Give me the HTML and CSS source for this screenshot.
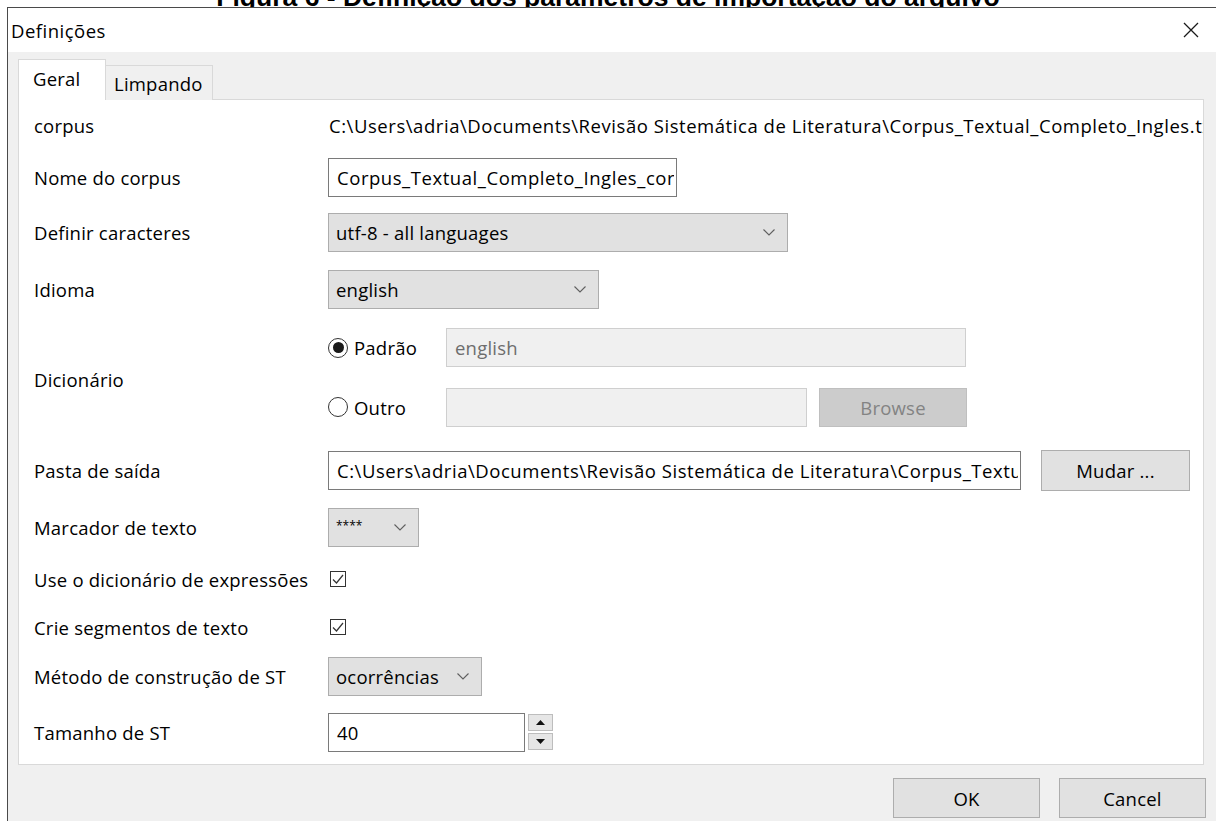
FILE: index.html
```html
<!DOCTYPE html>
<html lang="pt">
<head>
<meta charset="utf-8">
<title>Definições</title>
<link rel="stylesheet" href="styles.css">
</head>
<body>
<div class="caption"><span>Figura 6 - Definição dos parâmetros de importação do arquivo</span></div>
<div class="dialog">
  <div class="titlebar">
    <span class="title">Definições</span>
    <svg class="close" width="16" height="16" viewBox="0 0 16 16"><path d="M1 1 L15 15 M15 1 L1 15" stroke="#1a1a1a" stroke-width="1.3" fill="none"/></svg>
  </div>
  <div class="body">
    <div class="tabs">
      <div class="tab active">Geral</div>
      <div class="tab">Limpando</div>
    </div>
    <div class="panel">
      <div class="form">
        <div class="label r1">corpus</div>
        <div class="ctl r1"><span class="clip path">C:\Users\adria\Documents\Revisão Sistemática de Literatura\Corpus_Textual_Completo_Ingles.txt</span></div>

        <div class="label r2">Nome do corpus</div>
        <div class="ctl r2"><div class="input w-nome"><span class="clip path">Corpus_Textual_Completo_Ingles_corpus</span></div></div>

        <div class="label r3">Definir caracteres</div>
        <div class="ctl r3"><div class="combo w-charset"><span>utf-8 - all languages</span><svg class="chev" width="12" height="7" viewBox="0 0 12 7"><path d="M0.5 0.5 L6 6 L11.5 0.5" stroke="#5f5f5f" stroke-width="1.1" fill="none"/></svg></div></div>

        <div class="label r4">Idioma</div>
        <div class="ctl r4"><div class="combo w-idioma"><span>english</span><svg class="chev" width="12" height="7" viewBox="0 0 12 7"><path d="M0.5 0.5 L6 6 L11.5 0.5" stroke="#5f5f5f" stroke-width="1.1" fill="none"/></svg></div></div>

        <div class="label r5">Dicionário</div>
        <div class="ctl r5 dict">
          <div class="dict-row first">
            <div class="radio-opt"><span class="radio on"></span>Padrão</div>
            <div class="input disabled w-padrao">english</div>
          </div>
          <div class="dict-row">
            <div class="radio-opt"><span class="radio"></span>Outro</div>
            <div class="input disabled w-outro"></div>
            <div class="btn disabled w-browse">Browse</div>
          </div>
        </div>

        <div class="label r6">Pasta de saída</div>
        <div class="ctl r6"><div class="input w-pasta"><span class="clip path">C:\Users\adria\Documents\Revisão Sistemática de Literatura\Corpus_Textual_Completo_Ingles_corpus</span></div><div class="btn w-mudar">Mudar ...</div></div>

        <div class="label r7">Marcador de texto</div>
        <div class="ctl r7"><div class="combo w-marc"><span class="stars">****</span><svg class="chev" width="12" height="7" viewBox="0 0 12 7"><path d="M0.5 0.5 L6 6 L11.5 0.5" stroke="#5f5f5f" stroke-width="1.1" fill="none"/></svg></div></div>

        <div class="label r8">Use o dicionário de expressões</div>
        <div class="ctl r8"><span class="check"><svg width="14" height="14" viewBox="0 0 14 14"><path d="M2 7.5 L5.5 11 L12 3" stroke="#333" stroke-width="1.2" fill="none"/></svg></span></div>

        <div class="label r9">Crie segmentos de texto</div>
        <div class="ctl r9"><span class="check"><svg width="14" height="14" viewBox="0 0 14 14"><path d="M2 7.5 L5.5 11 L12 3" stroke="#333" stroke-width="1.2" fill="none"/></svg></span></div>

        <div class="label r10">Método de construção de ST</div>
        <div class="ctl r10"><div class="combo w-metodo"><span>ocorrências</span><svg class="chev" width="12" height="7" viewBox="0 0 12 7"><path d="M0.5 0.5 L6 6 L11.5 0.5" stroke="#5f5f5f" stroke-width="1.1" fill="none"/></svg></div></div>

        <div class="label r11">Tamanho de ST</div>
        <div class="ctl r11"><div class="input w-tam">40</div>
          <div class="spin">
            <span class="spin-btn"><svg width="9" height="5" viewBox="0 0 9 5"><path d="M0 5 L4.5 0 L9 5 Z" fill="#111"/></svg></span>
            <span class="spin-btn"><svg width="9" height="5" viewBox="0 0 9 5"><path d="M0 0 L4.5 5 L9 0 Z" fill="#111"/></svg></span>
          </div>
        </div>
      </div>
    </div>
    <div class="actions">
      <div class="btn w-action">OK</div>
      <div class="btn w-action">Cancel</div>
    </div>
  </div>
</div>
</body>
</html>
```
FILE: styles.css
```css
html, body {
  margin: 0;
  padding: 0;
  background: #ffffff;
  overflow: hidden;
}

body {
  width: 1216px;
  height: 821px;
  font-family: "Open Sans", "Noto Sans", sans-serif;
  font-size: 18.5px;
  letter-spacing: 0.22px;
  color: #000;
}

/* figure caption, mostly scrolled out of view */
.caption {
  height: 7px;
  overflow: hidden;
  text-align: center;
  font-family: "Liberation Sans", Arial, sans-serif;
  font-weight: bold;
  font-size: 26.5px;
  line-height: 30px;
  letter-spacing: 0;
}
.caption span {
  display: block;
  margin-top: -18.5px;
}

.dialog {
  margin-left: 7px;
  border-top: 1px solid #4a4a4a;
  border-left: 1px solid #4a4a4a;
  height: 813px;
  display: flex;
  flex-direction: column;
}

.titlebar {
  height: 44px;
  background: #fff;
  display: flex;
  align-items: center;
  justify-content: space-between;
  padding: 0 17px 0 3px;
  flex: none;
}
.title { letter-spacing: 0.5px; }

.body {
  flex: 1;
  background: #f0f0f0;
  padding: 8px 0 0 10px;
  display: flex;
  flex-direction: column;
}

.tabs {
  display: flex;
  align-items: flex-end;
  height: 40px;
  margin-bottom: -1px;
  position: relative;
  z-index: 1;
}
.tab {
  height: 35px;
  box-sizing: border-box;
  padding: 0 10px 0 8px;
  border: 1px solid #d9d9d9;
  border-bottom: none;
  background: #f0f0f0;
  display: flex;
  align-items: center;
}
.tab.active {
  height: 41px;
  width: 88px;
  background: #fff;
  padding-left: 14px;
  padding-bottom: 4px;
}
.tab:not(.active) {
  border-left: none;
  width: 107px;
}

.panel {
  width: 1186px;
  height: 666px;
  box-sizing: border-box;
  background: #fff;
  border: 1px solid #d9d9d9;
  padding: 0 0 0 14px;
  overflow: hidden;
}

.form {
  display: grid;
  grid-template-columns: 295px 1fr;
  grid-template-rows: 50px 54px 57px 57px 121px 62px 53px 50px 46px 53px 58px;
}
.label, .ctl {
  display: flex;
  align-items: center;
  white-space: nowrap;
}
.r1 { grid-row: 1; }
.r2 { grid-row: 2; }
.r3 { grid-row: 3; }
.r4 { grid-row: 4; }
.r5 { grid-row: 5; }
.r6 { grid-row: 6; }
.r7 { grid-row: 7; }
.r8 { grid-row: 8; }
.r9 { grid-row: 9; }
.r10 { grid-row: 10; }
.r11 { grid-row: 11; }
.label { grid-column: 1; padding-left: 1px; }
.ctl { grid-column: 2; overflow: hidden; min-width: 0; }
.label.r5 { padding-top: 2px; }

.clip {
  display: block;
  overflow: hidden;
  white-space: nowrap;
  min-width: 0;
  flex: 1;
}
/* file names and paths run a little wider than the labels */
.path {
  letter-spacing: 0.55px;
}
.ctl.r1 .path { padding-left: 1px; }

.input {
  height: 39px;
  box-sizing: border-box;
  border: 1px solid #7a7a7a;
  background: #fff;
  padding-left: 8px;
  display: flex;
  align-items: center;
  overflow: hidden;
  white-space: nowrap;
  flex: none;
}
.input.disabled {
  background: #f0f0f0;
  border-color: #cfcfcf;
  color: #6d6d6d;
}

.combo {
  height: 39px;
  box-sizing: border-box;
  border: 1px solid #adadad;
  background: #e1e1e1;
  padding: 0 12px 0 7px;
  display: flex;
  align-items: center;
  justify-content: space-between;
  flex: none;
}
.chev { flex: none; }
.stars {
  font-size: 12px;
  align-self: flex-start;
  margin-top: 8px;
  letter-spacing: 0;
}

.btn {
  height: 41px;
  box-sizing: border-box;
  border: 1px solid #adadad;
  background: #e1e1e1;
  display: flex;
  align-items: center;
  justify-content: center;
  flex: none;
}
.btn.disabled {
  background: #cccccc;
  border-color: #bfbfbf;
  color: #838383;
  height: 39px;
}

.w-nome { width: 349px; padding-right: 2px; }
.w-charset { width: 460px; }
.w-idioma { width: 271px; }
.w-padrao { width: 520px; }
.w-outro { width: 361px; }
.w-browse { width: 148px; margin-left: 12px; }
.w-pasta { width: 693px; padding-right: 2px; }
.w-mudar { width: 149px; margin-left: 20px; }
.w-marc { width: 91px; }
.w-metodo { width: 154px; }
.w-tam { width: 197px; }
.w-action { width: 147px; height: 40px; }

.dict {
  flex-direction: column;
  align-items: stretch;
  justify-content: flex-start;
}
.dict-row {
  display: flex;
  align-items: center;
  height: 60px;
}
.dict-row.first { height: 59px; }
.radio-opt {
  width: 118px;
  display: flex;
  align-items: center;
  flex: none;
}
.radio {
  width: 20px;
  height: 20px;
  box-sizing: border-box;
  border: 1.5px solid #333;
  border-radius: 50%;
  margin: 0 6px 0 0;
  display: flex;
  align-items: center;
  justify-content: center;
  flex: none;
}
.radio.on::after {
  content: "";
  width: 11px;
  height: 11px;
  border-radius: 50%;
  background: #1a1a1a;
}

.check {
  width: 16px;
  height: 16px;
  box-sizing: border-box;
  border: 1px solid #333;
  margin-left: 2px;
  display: flex;
  align-items: center;
  justify-content: center;
  background: #fff;
}

.spin {
  display: flex;
  flex-direction: column;
  gap: 2px;
  margin-left: 3px;
}
.spin-btn {
  width: 25px;
  height: 17px;
  box-sizing: border-box;
  border: 1px solid #bdbdbd;
  background: #e6e6e6;
  display: flex;
  align-items: center;
  justify-content: center;
}

.actions {
  display: flex;
  justify-content: flex-end;
  gap: 19px;
  padding: 13px 10px 0 0;
}
```
